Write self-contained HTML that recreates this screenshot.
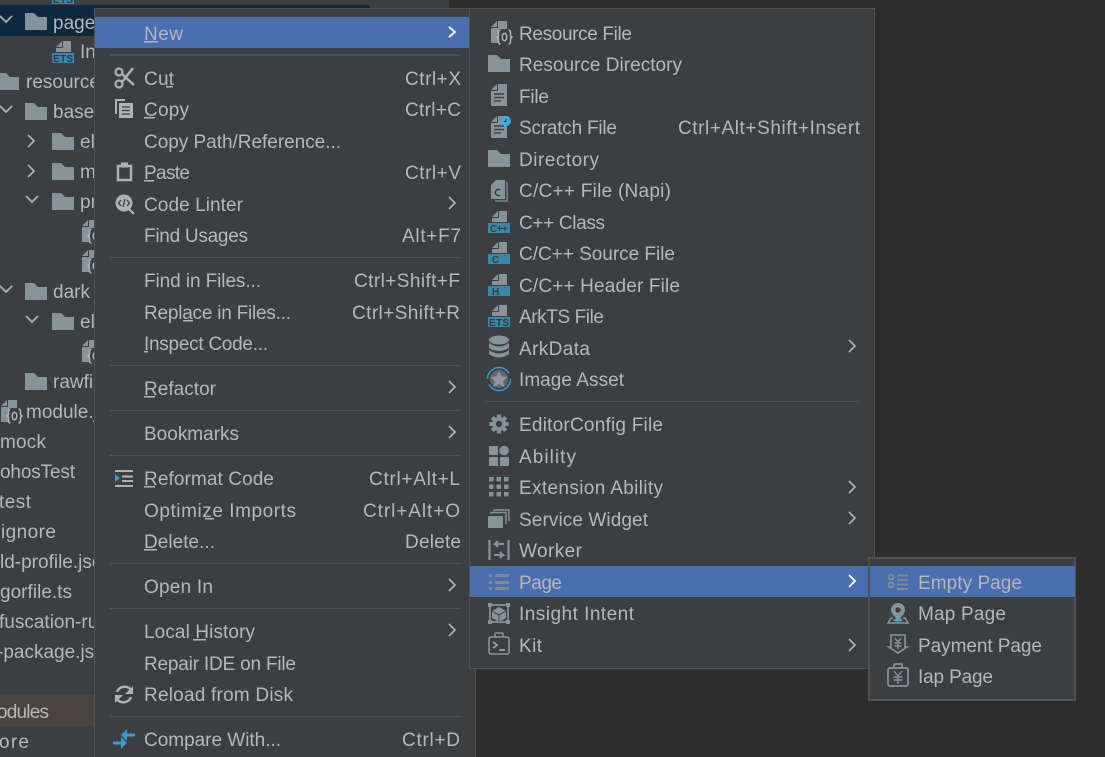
<!DOCTYPE html>
<html><head><meta charset="utf-8"><style>
html,body{margin:0;padding:0;background:#2d2d2d;width:1105px;height:757px;overflow:hidden}
svg{display:block;position:absolute;left:0;top:0}
text{font-family:"Liberation Sans",sans-serif;font-size:19px;fill:#b5b7b9}
.m{font-size:10px;font-weight:700;fill:#2c3e47}
</style></head><body>
<svg width="1105" height="757" viewBox="0 0 1105 757" xmlns="http://www.w3.org/2000/svg">
<defs>
<clipPath id="tree"><rect x="0" y="0" width="94" height="757"/></clipPath>
<symbol id="folder" width="22" height="17" overflow="visible"><path fill="#87939a" d="M0 0H9L13 4H22V17H0Z"/></symbol>
<symbol id="doc" width="16" height="22" overflow="visible"><path fill="#87939a" d="M0 6L6 0V6ZM7 0H16V22H0V7H7Z"/><path stroke="#3c3f41" stroke-width="1.600" d="M3 10H13M3 13.500H13M3 17H10"/></symbol>
<symbol id="res" width="24" height="24" overflow="visible"><path fill="#87939a" d="M0 6L6 0V6ZM7 0H16V8H8V22H0V7H7Z"/><g fill="none" stroke="#a9b3b8" stroke-width="1.500"><path d="M9.500 9Q7.500 9 7.500 12V14Q7.500 15.500 5.500 16Q7.500 16.500 7.500 18V20Q7.500 23 9.500 23M17.500 9Q19.500 9 19.500 12V14Q19.500 15.500 21.500 16Q19.500 16.500 19.500 18V20Q19.500 23 17.500 23"/><ellipse cx="13.500" cy="16" rx="2.300" ry="3.800"/></g></symbol>
<symbol id="ets" width="22" height="23" overflow="visible"><path fill="#87939a" d="M4 7L10 1V7ZM11 1H19V12H4V8H11Z"/><rect y="13" width="22" height="10" fill="#3b87a8"/><text x="1" y="22" class="m" textLength="20">ETS</text></symbol>
<symbol id="srcf" width="22" height="23" overflow="visible"><path fill="#87939a" d="M4 7L10 1V7ZM11 1H19V12H4V8H11Z"/><rect y="13" width="22" height="10" fill="#3b87a8"/></symbol>
</defs>

<!-- project panel -->
<rect x="0" y="0" width="370" height="757" fill="#3c3f41"/>
<rect x="370" y="0" width="79" height="8" fill="#3c3f41"/>
<rect x="0" y="5" width="370" height="31" fill="#0d293e"/>
<rect x="0" y="695" width="370" height="31" fill="#49453e"/>

<g clip-path="url(#tree)">
<use href="#ets" x="52" y="-19"/>
<path fill="none" stroke="#afb1b3" stroke-width="1.700" d="M0 16L6 22L12 16M0 106L6 112L12 106M28 135L34 141L28 147M28 165L34 171L28 177M26 196L32 202L38 196M0 286L6 292L12 286M26 316L32 322L38 316"/>
<use href="#folder" x="25" y="13"/><text x="53" y="29">pages</text>
<use href="#ets" x="52" y="40"/><text x="80" y="58">Index</text>
<use href="#folder" x="-3" y="73"/><text x="26" y="88">resources</text>
<use href="#folder" x="25" y="103"/><text x="53" y="118">base</text>
<use href="#folder" x="52" y="133"/><text x="80" y="148">element</text>
<use href="#folder" x="52" y="163"/><text x="80" y="178">media</text>
<use href="#folder" x="52" y="193"/><text x="80" y="208">profile</text>
<use href="#res" x="82" y="220"/><use href="#res" x="82" y="250"/>
<use href="#folder" x="25" y="283"/><text x="53" y="298">dark</text>
<use href="#folder" x="52" y="313"/><text x="80" y="328">element</text>
<use href="#res" x="82" y="340"/>
<use href="#folder" x="25" y="373"/><text x="53" y="388">rawfile</text>
<use href="#res" x="1" y="400"/><text x="26" y="418">module.json5</text>
<text x="0" y="448" textLength="46">mock</text>
<text x="0" y="478" textLength="75">ohosTest</text>
<text x="-1" y="508" textLength="32">test</text>
<text x="1" y="538" textLength="55">ignore</text>
<text x="0" y="568">ld-profile.json5</text>
<text x="0" y="598" textLength="72">gorfile.ts</text>
<text x="-1" y="628">fuscation-rules</text>
<text x="-3" y="658">-package.json5</text>
<text x="-3" y="718" textLength="52">odules</text>
<text x="-1" y="748" textLength="30">ore</text>
</g>

<!-- main menu -->
<rect x="94.500" y="8.500" width="381" height="760" fill="#3c3f41" stroke="#515151"/>
<rect x="95" y="17" width="375" height="31" fill="#4b6eaf"/>
<g fill="#515151">
<rect x="110" y="54" width="350" height="2"/><rect x="110" y="257" width="350" height="1"/><rect x="110" y="365" width="350" height="1"/><rect x="110" y="410" width="350" height="1"/><rect x="110" y="455" width="350" height="1"/><rect x="110" y="563" width="350" height="1"/><rect x="110" y="608" width="350" height="1"/><rect x="110" y="716" width="350" height="1"/>
</g>

<text x="144" y="40" textLength="39">New</text>
<text x="144" y="85" textLength="30">Cut</text>
<text x="144" y="116" textLength="45">Copy</text>
<text x="144" y="148" textLength="197">Copy Path/Reference...</text>
<text x="144" y="179" textLength="46">Paste</text>
<text x="144" y="211" textLength="99">Code Linter</text>
<text x="144" y="242" textLength="104">Find Usages</text>
<text x="144" y="287" textLength="117">Find in Files...</text>
<text x="144" y="319" textLength="147">Replace in Files...</text>
<text x="144" y="350" textLength="124">Inspect Code...</text>
<text x="144" y="395" textLength="72">Refactor</text>
<text x="144" y="440" textLength="95">Bookmarks</text>
<text x="144" y="485" textLength="130">Reformat Code</text>
<text x="144" y="517" textLength="152">Optimize Imports</text>
<text x="144" y="548" textLength="71">Delete...</text>
<text x="144" y="593" textLength="69">Open In</text>
<text x="144" y="638" textLength="111">Local History</text>
<text x="144" y="670" textLength="152">Repair IDE on File</text>
<text x="144" y="701" textLength="149">Reload from Disk</text>
<text x="144" y="746" textLength="137">Compare With...</text>

<!-- mnemonics -->
<g fill="#b3b5b7">
<rect x="144" y="41" width="14" height="1.500"/><rect x="166" y="86" width="7" height="1.500"/><rect x="144" y="117" width="11" height="1.500"/><rect x="144" y="180" width="10" height="1.500"/><rect x="183" y="320" width="10" height="1.500"/><rect x="144" y="351" width="4" height="1.500"/><rect x="144" y="396" width="11" height="1.500"/><rect x="144" y="486" width="11" height="1.500"/><rect x="205" y="518" width="9" height="1.500"/><rect x="144" y="549" width="13" height="1.500"/><rect x="193" y="639" width="13" height="1.500"/>
</g>

<!-- shortcuts -->
<text x="405" y="85" textLength="56">Ctrl+X</text>
<text x="405" y="116" textLength="56">Ctrl+C</text>
<text x="405" y="179" textLength="56">Ctrl+V</text>
<text x="402" y="242" textLength="59">Alt+F7</text>
<text x="354" y="287" textLength="106">Ctrl+Shift+F</text>
<text x="352" y="319" textLength="108">Ctrl+Shift+R</text>
<text x="369" y="485" textLength="91">Ctrl+Alt+L</text>
<text x="363" y="517" textLength="97">Ctrl+Alt+O</text>
<text x="405" y="548" textLength="56">Delete</text>
<text x="402" y="746" textLength="58">Ctrl+D</text>

<!-- chevrons menu 1 -->
<path fill="none" stroke="#afb1b3" stroke-width="1.700" d="M449 197L455 203L449 209M449 381L455 387L449 393M449 426L455 432L449 438M449 579L455 585L449 591M449 624L455 630L449 636"/>

<!-- menu 1 icons -->
<g>
<g fill="none" stroke="#afb1b3" stroke-width="2.200"><circle cx="119" cy="72" r="3.500"/><circle cx="119" cy="84" r="3.500"/><path stroke-width="2.400" d="M122 74L134 85M122 82L133 68"/></g>
<path fill="#afb1b3" d="M115 99H125V101H117V114H115Z"/><path fill="#afb1b3" d="M119 103H133V118H119Z"/><path stroke="#3c3f41" stroke-width="1.300" d="M122 107H130M122 110.500H130M122 114H130"/>
<path fill="none" stroke="#afb1b3" stroke-width="2.400" d="M121 166H118V180H131V166H128"/><rect x="121" y="162.500" width="7" height="5" fill="#afb1b3"/>
<circle cx="124" cy="203" r="8.500" fill="#afb1b3"/><path stroke="#afb1b3" stroke-width="2.200" d="M129 209L134 214"/><path fill="none" stroke="#3c3f41" stroke-width="1.300" d="M121 200L118.500 203L121 206M127 200L129.500 203L127 206M125 199L123 207"/>
<path fill="#afb1b3" d="M115 470H133V472H115ZM122 475.500H133V477.500H122ZM122 480H133V482H122ZM115 485H133V487H115Z"/><path fill="#3b9ad0" d="M115 474L120 478L115 482Z"/>
<path fill="none" stroke="#afb1b3" stroke-width="2.400" d="M117 692A8 8 0 0 1 131 690M131 697A8 8 0 0 1 117 699"/><path fill="#afb1b3" d="M133 686V694H125ZM115 703V695H123Z"/>
<path fill="#3b9ad0" d="M121 735L127 729V733.500H135V736.500H127V741ZM127 743L121 737V741.500H113V744.500H121V749Z"/>
</g>

<!-- New submenu -->
<rect x="469.500" y="8.500" width="405" height="660" fill="#3c3f41" stroke="#515151"/>
<rect x="470" y="566" width="399" height="31" fill="#4b6eaf"/>
<rect x="485" y="401" width="374" height="1" fill="#515151"/>

<text x="519" y="40" textLength="113">Resource File</text>
<text x="519" y="71" textLength="163">Resource Directory</text>
<text x="519" y="103" textLength="30">File</text>
<text x="519" y="134" textLength="98">Scratch File</text>
<text x="678" y="134" textLength="182">Ctrl+Alt+Shift+Insert</text>
<text x="519" y="166" textLength="80">Directory</text>
<text x="519" y="197" textLength="152">C/C++ File (Napi)</text>
<text x="519" y="229" textLength="86">C++ Class</text>
<text x="519" y="260" textLength="156">C/C++ Source File</text>
<text x="519" y="292" textLength="161">C/C++ Header File</text>
<text x="519" y="323" textLength="85">ArkTS File</text>
<text x="519" y="355" textLength="71">ArkData</text>
<text x="519" y="386" textLength="105">Image Asset</text>
<text x="519" y="431" textLength="144">EditorConfig File</text>
<text x="519" y="463" textLength="57">Ability</text>
<text x="519" y="494" textLength="144">Extension Ability</text>
<text x="519" y="526" textLength="129">Service Widget</text>
<text x="519" y="557" textLength="63">Worker</text>
<text x="519" y="589" textLength="43">Page</text>
<text x="519" y="620" textLength="115">Insight Intent</text>
<text x="519" y="652" textLength="23">Kit</text>

<path fill="none" stroke="#afb1b3" stroke-width="1.700" d="M849 340L855 346L849 352M849 481L855 487L849 493M849 512L855 518L849 524M849 639L855 645L849 651"/>
<path fill="none" stroke="#fff" stroke-width="1.800" d="M449 27L455 32L449 37M849 575L855 581L849 587"/>

<!-- submenu icons -->
<use href="#res" x="491" y="21"/>
<use href="#folder" x="488" y="55"/>
<use href="#doc" x="491" y="84"/>
<use href="#doc" x="491" y="116"/><circle cx="506" cy="121" r="5" fill="#3bb0e0"/><path stroke="#1d3a4a" stroke-width="1" fill="none" d="M506 118.500V121.500H504"/>
<use href="#folder" x="488" y="150"/>
<path fill="#87939a" d="M491 185L496 180H505V199H491Z"/><path fill="none" stroke="#87939a" stroke-width="1.300" d="M507 182V201H495"/><path fill="none" stroke="#2c3e47" stroke-width="1.500" d="M500 190A3 3 0 1 0 500 195"/>
<use href="#srcf" x="488" y="210"/><text x="490" y="232" class="m" textLength="18">C++</text>
<use href="#srcf" x="488" y="241"/><text x="492" y="263" class="m">C</text>
<use href="#srcf" x="488" y="273"/><text x="492" y="295" class="m">H</text>
<use href="#ets" x="488" y="304"/>
<g fill="#87939a"><ellipse cx="499" cy="340" rx="10" ry="4.500"/><path d="M489 343Q499 350 509 343V348Q499 354 489 348ZM489 350Q499 357 509 350V354Q499 361 489 354Z"/></g>
<circle cx="499" cy="379" r="11.500" fill="none" stroke="#3b9ad0" stroke-width="1.500" stroke-dasharray="30 6"/><circle cx="499" cy="379" r="9" fill="#5f686d"/><path fill="#8f9aa0" d="M499 371L501.500 376.500L507.500 377L503 381L504.500 387L499 384L493.500 387L495 381L490.500 377L496.500 376.500Z"/>
<g transform="translate(499 424)"><g fill="#87939a"><circle r="7"/><rect x="-2" y="-9.500" width="4" height="19"/><rect x="-2" y="-9.500" width="4" height="19" transform="rotate(45)"/><rect x="-2" y="-9.500" width="4" height="19" transform="rotate(90)"/><rect x="-2" y="-9.500" width="4" height="19" transform="rotate(135)"/></g><circle r="3.200" fill="#3c3f41"/></g>
<g fill="#87939a"><rect x="489" y="446" width="9" height="9"/><circle cx="504" cy="450.500" r="4.800"/><rect x="489" y="457" width="9" height="9"/><rect x="500" y="457" width="9" height="9"/>
<rect x="489" y="477" width="4.500" height="4.500"/><rect x="496.500" y="477" width="4.500" height="4.500"/><rect x="504" y="477" width="4.500" height="4.500"/><rect x="489" y="484.500" width="4.500" height="4.500"/><rect x="496.500" y="484.500" width="4.500" height="4.500"/><rect x="504" y="484.500" width="4.500" height="4.500"/><rect x="489" y="492" width="4.500" height="4.500"/><rect x="496.500" y="492" width="4.500" height="4.500"/><rect x="504" y="492" width="4.500" height="4.500"/>
<rect x="488" y="516" width="15" height="12" rx="1"/></g>
<path fill="none" stroke="#87939a" stroke-width="1.400" d="M491 514V512.500H506V524M494 511V510H509V521"/>
<g fill="none" stroke="#87939a"><path stroke-width="2.200" d="M489.500 540V560M508.500 540V560"/><path stroke-width="2" d="M504 544H495L498 541M495 544L498 547M494 555H503L500 552M503 555L500 558"/></g>
<path fill="#7f8b91" d="M489 574H492V577H489ZM495 574H509V577H495ZM489 581H492V584H489ZM495 581H509V584H495ZM489 587H492V590H489ZM495 587H509V590H495Z"/>
<g fill="none" stroke="#87939a" stroke-width="1.700"><rect x="490" y="605" width="18" height="17"/></g><g fill="#87939a"><rect x="488" y="603" width="4" height="4"/><rect x="506" y="603" width="4" height="4"/><rect x="488" y="620" width="4" height="4"/><rect x="506" y="620" width="4" height="4"/><path d="M499 607L506 611V618L499 622L492 618V611Z"/></g><path fill="none" stroke="#3c3f41" stroke-width="1" d="M492 611L499 615L506 611M499 615V622"/>
<g fill="none" stroke="#87939a" stroke-width="1.600"><rect x="489" y="637" width="20" height="17" rx="2"/><path d="M495 637V634Q495 633 496 633H502Q503 633 503 634V637"/><path d="M493 642L497 645L493 648M499 650H505" stroke="#a4aeb3"/></g>

<!-- Page submenu -->
<rect x="869" y="558" width="206" height="142" fill="#3c3f41" stroke="#4f5152" stroke-width="2"/>
<rect x="870" y="566" width="205" height="31" fill="#4b6eaf"/>
<text x="918" y="589" textLength="104">Empty Page</text>
<text x="918" y="620" textLength="88">Map Page</text>
<text x="918" y="652" textLength="124">Payment Page</text>
<text x="918" y="683" textLength="75">Iap Page</text>

<g fill="none" stroke="#87939a" stroke-width="1.700"><circle cx="891" cy="577" r="2.500"/><circle cx="891" cy="585" r="2.500"/><path stroke-width="2" d="M897 575.500H908M897 580H908M897 584.500H908M897 589H908" stroke="#7f8b91"/></g>
<path fill="#87939a" d="M898 603A7 7 0 0 1 905 610Q905 614 898 620Q891 614 891 610A7 7 0 0 1 898 603Z"/><circle cx="898" cy="610" r="2.700" fill="#3c3f41"/><path fill="none" stroke="#87939a" stroke-width="1.500" d="M893 618H891L888 623H908L905 618H903"/><ellipse cx="898" cy="620" rx="4.500" ry="1.600" fill="#3bb0e0"/>
<path fill="none" stroke="#87939a" stroke-width="1.600" d="M891 635H905V647L907 647L898 653L889 647H891Z"/><path fill="none" stroke="#87939a" stroke-width="1.500" d="M895 638L898 642L901 638M894.500 643H901.500M894.500 646H901.500M898 642V649"/>
<g fill="none" stroke="#87939a" stroke-width="1.700"><rect x="888" y="668" width="20" height="18" rx="2"/><path d="M894 668V665Q894 664 895 664H901Q902 664 902 665V668"/><path d="M894 671L898 676L902 671M893.500 677H902.500M893.500 680H902.500M898 676V684" stroke-width="1.400"/></g>
</svg>
</body></html>
